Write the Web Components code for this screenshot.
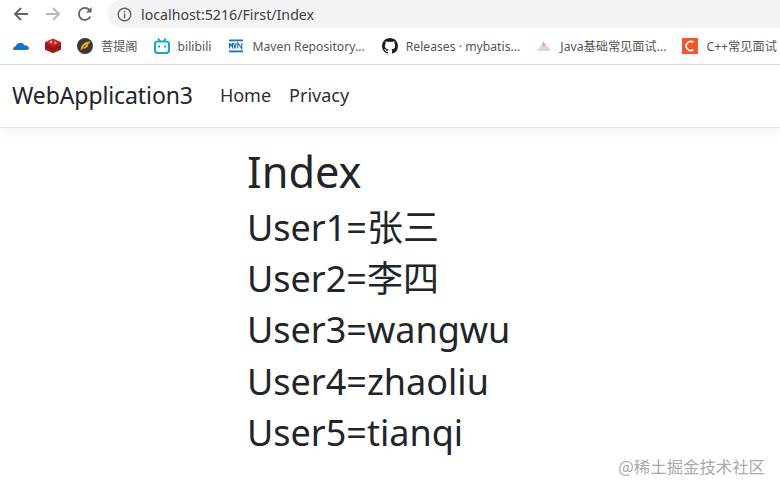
<!DOCTYPE html>
<html lang="zh">
<head>
<meta charset="utf-8">
<title>Index</title>
<style>
    html, body { margin: 0; height: 100%; background: #fff; overflow: hidden; }
    body {
        position: relative;
        display: flex;
        flex-direction: column;
        font-family: "Noto Sans", "Noto Sans CJK SC", sans-serif;
    }
</style>
</head>
<body>
<browser-toolbar url="localhost:5216/First/Index"></browser-toolbar>
<bookmark-bar>
    <bookmark-item icon="cloud"></bookmark-item>
    <bookmark-item icon="redis"></bookmark-item>
    <bookmark-item icon="leaf" label="菩提阁"></bookmark-item>
    <bookmark-item icon="bili" label="bilibili"></bookmark-item>
    <bookmark-item icon="mvn" label="Maven Repository..." style="margin-left: 1px"></bookmark-item>
    <bookmark-item icon="github" label="Releases · mybatis..." style="margin-left: 1px"></bookmark-item>
    <bookmark-item icon="java" label="Java基础常见面试..."></bookmark-item>
    <bookmark-item icon="cpp" label="C++常见面试"></bookmark-item>
</bookmark-bar>
<site-nav brand="WebApplication3">
    <a>Home</a>
    <a>Privacy</a>
</site-nav>
<page-content heading="Index">
    <user-line>User1=张三</user-line>
    <user-line>User2=李四</user-line>
    <user-line>User3=wangwu</user-line>
    <user-line>User4=zhaoliu</user-line>
    <user-line>User5=tianqi</user-line>
</page-content>
<water-mark>@稀土掘金技术社区</water-mark>

<script>
// Иконки закладок
const BOOKMARK_ICONS = {
    cloud: `<svg viewBox="1 2 16 16"><path fill="#1a6fd0" d="M1 13.200c0-1.600 1.200-2.800 2.700-2.900C4.400 8.200 6.200 6.800 8.400 6.800c1.800 0 3.300 1 4 2.500 2.300-.2 4.600 1.200 4.600 3 0 1-.8 1.700-2 1.700H3c-1.200 0-2-.3-2-.8z"/></svg>`,
    redis: `<svg viewBox="1 1.300 16 16"><path fill="#a51c1c" d="M1 5.500 9 2l8 3.500v7.500L9 16.500 1 13z"/><path fill="#cf2a27" d="M1 5.500 9 2l8 3.500L9 9z"/><path stroke="#7d1414" stroke-width="1" fill="none" d="M1 9.200l8 3.600 8-3.600"/><circle cx="7" cy="5.200" r="1.100" fill="#f6d6d0"/><circle cx="11.500" cy="6" r="1" fill="#f6d6d0"/></svg>`,
    leaf: `<svg viewBox="0 0 16 16"><circle cx="8" cy="8" r="8" fill="#3a3833"/><path fill="#e6ac1e" d="M3.500 12.500C3.600 7.500 7 3.800 13.300 3.300c-.4 1.300-1 2.300-2.200 3 .3 2.900-2.500 4.800-5.200 4.200-.9.500-1.700 1.200-2.400 2z"/><path fill="#3a3833" d="M6 9.200c1-1.400 2.300-2.400 4-3-1.200 1-2.200 2-3 3.300z"/></svg>`,
    bili: `<svg viewBox="0 0 16 16"><path stroke="#17a6cf" stroke-width="1.700" stroke-linecap="round" d="M4.500 1 6 3M11.500 1 10 3"/><rect x="1" y="3.500" width="14" height="11.500" rx="2.500" fill="#fff" stroke="#17a6cf" stroke-width="2.200"/><path stroke="#17a6cf" stroke-width="2" d="M5 7.500v2M11 7.500v2"/></svg>`,
    mvn: `<svg viewBox="0 0 16 16"><rect x="1" y="1.500" width="14" height="1.800" fill="#1b6fb8"/><rect x="1" y="12.500" width="14" height="1.800" fill="#1b6fb8"/><path fill="none" stroke="#1b6fb8" stroke-width="1.100" d="M1.500 10.500V5l1.500 3 1.500-3v5.500M5.600 5l1.300 5.500L8.200 5M9.800 10.500V5l4 5.500V5"/></svg>`,
    github: `<svg viewBox="0 0 16 16"><path fill="#1b1f23" d="M8 0C3.580 0 0 3.580 0 8c0 3.540 2.290 6.530 5.470 7.590.4.070.55-.17.55-.38 0-.19-.01-.82-.01-1.490-2.010.37-2.530-.49-2.690-.94-.09-.23-.48-.94-.82-1.130-.28-.15-.68-.52-.01-.53.630-.01 1.080.58 1.230.82.720 1.210 1.870.87 2.330.66.070-.52.280-.87.510-1.070-1.780-.2-3.640-.89-3.640-3.950 0-.87.310-1.590.820-2.150-.08-.2-.36-1.020.08-2.120 0 0 .67-.21 2.200.82.640-.18 1.320-.27 2-.27s1.360.09 2 .27c1.530-1.040 2.200-.82 2.200-.82.440 1.100.16 1.920.08 2.120.51.560.82 1.270.82 2.150 0 3.070-1.870 3.750-3.650 3.950.29.250.54.730.54 1.480 0 1.070-.01 1.930-.01 2.200 0 .21.150.46.55.38A8.010 8.010 0 0 0 16 8c0-4.420-3.580-8-8-8z"/></svg>`,
    java: `<svg viewBox="0 0 16 16"><path fill="#e0a9b8" d="M7.500 3 10.500 8.500H5z"/><path fill="#eec6d2" d="M4 8.500h8l1.500 2h-10z"/><path fill="#c4dde6" d="M1.500 10.500h13l-1 2.500h-11z"/></svg>`,
    cpp: `<svg viewBox="0 0 16 16"><rect width="16" height="16" fill="#f0582b"/><path fill="none" stroke="#fff" stroke-width="1.700" d="M11.300 4.300A4.500 4.500 0 1 0 11.300 11.700"/></svg>`
};

// Верхняя панель браузера
class BrowserToolbar extends HTMLElement {
    constructor() {
        super();
        this.attachShadow({ mode: 'open' });
    }

    connectedCallback() {
        this.shadowRoot.innerHTML = `
            <style>
                :host { display: flex; align-items: center; height: 28px; flex: none; background: #fff; }
                .btn { width: 18px; height: 18px; flex: none; display: block; }
                .back { margin-left: 12px; }
                .forward { margin-left: 14px; }
                .reload { margin-left: 14px; }
                .address {
                    flex: 1;
                    height: 28px;
                    margin-left: 14px;
                    background: #f1f3f4;
                    border-radius: 14px 0 0 14px;
                    display: flex;
                    align-items: center;
                    gap: 9px;
                    padding-left: 9px;
                    font: 14.200px "Noto Sans", sans-serif;
                    color: #3c4043;
                }
            </style>
            <svg class="btn back" viewBox="0 0 18 18"><path fill="none" stroke="#5f6368" stroke-width="1.800" d="M16 9H3M9 3 3 9l6 6"/></svg>
            <svg class="btn forward" viewBox="0 0 18 18"><path fill="none" stroke="#b5b8bb" stroke-width="1.800" d="M2 9h13M9 3l6 6-6 6"/></svg>
            <svg class="btn reload" viewBox="0 0 18 18"><path fill="none" stroke="#5f6368" stroke-width="1.800" d="M14.300 11.500A6 6 0 1 1 13.300 4.800"/><path fill="#5f6368" d="M15.500 2v5.500H10z"/></svg>
            <div class="address">
                <svg width="15" height="15" viewBox="0 0 15 15"><circle cx="7.500" cy="7.500" r="6.300" fill="none" stroke="#5f6368" stroke-width="1.400"/><rect x="6.800" y="6.500" width="1.500" height="4.500" fill="#5f6368"/><rect x="6.800" y="3.900" width="1.500" height="1.500" fill="#5f6368"/></svg>
                <span>${this.getAttribute('url')}</span>
            </div>
        `;
    }
}

// Панель закладок
class BookmarkBar extends HTMLElement {
    constructor() {
        super();
        this.attachShadow({ mode: 'open' });
    }

    connectedCallback() {
        this.shadowRoot.innerHTML = `
            <style>
                :host {
                    display: flex;
                    align-items: center;
                    gap: 16px;
                    height: 36px;
                    flex: none;
                    padding-left: 13px;
                    background: #fff;
                    border-bottom: 1px solid #dcdcdc;
                    overflow: hidden;
                    white-space: nowrap;
                }
            </style>
            <slot></slot>
        `;
    }
}

class BookmarkItem extends HTMLElement {
    constructor() {
        super();
        this.attachShadow({ mode: 'open' });
    }

    connectedCallback() {
        const label = this.getAttribute('label');
        this.shadowRoot.innerHTML = `
            <style>
                :host { display: flex; align-items: center; gap: 8px; flex: none; }
                span {
                    font: 12.200px "Noto Sans", "Noto Sans CJK SC", sans-serif;
                    color: #555;
                }
                svg { display: block; width: 16px; height: 16px; }
            </style>
            ${BOOKMARK_ICONS[this.getAttribute('icon')]}
            ${label ? `<span>${label}</span>` : ''}
        `;
    }
}

// Навигация сайта
class SiteNav extends HTMLElement {
    constructor() {
        super();
        this.attachShadow({ mode: 'open' });
    }

    connectedCallback() {
        this.shadowRoot.innerHTML = `
            <style>
                :host {
                    display: flex;
                    align-items: center;
                    box-sizing: border-box;
                    height: 63px;
                    flex: none;
                    padding: 0 0 2px 12px;
                    background: #fff;
                    border-bottom: 1px solid #e3e3e3;
                    box-shadow: 0 4px 10px rgba(0, 0, 0, 0.05);
                    position: relative;
                    font-family: "Noto Sans", sans-serif;
                    color: #212529;
                }
                .brand { font-size: 23px; margin-right: 27px; letter-spacing: -0.1px; }
                nav { display: flex; gap: 18px; font-size: 18px; }
                ::slotted(a) { color: #2b2f33; }
            </style>
            <div class="brand">${this.getAttribute('brand')}</div>
            <nav><slot></slot></nav>
        `;
    }
}

// Содержимое страницы
class PageContent extends HTMLElement {
    constructor() {
        super();
        this.attachShadow({ mode: 'open' });
    }

    connectedCallback() {
        this.shadowRoot.innerHTML = `
            <style>
                :host {
                    display: block;
                    padding: 13px 0 0 247px;
                    color: #212529;
                    font-family: "Noto Sans", "Noto Sans CJK SC", sans-serif;
                }
                h1 { margin: 0; font-size: 43.300px; font-weight: 400; line-height: 61px; }
            </style>
            <h1>${this.getAttribute('heading')}</h1>
            <slot></slot>
        `;
    }
}

class UserLine extends HTMLElement {
    constructor() {
        super();
        this.attachShadow({ mode: 'open' });
    }

    connectedCallback() {
        this.shadowRoot.innerHTML = `
            <style>
                :host { display: block; font-size: 36px; line-height: 51.200px; white-space: nowrap; }
            </style>
            <slot></slot>
        `;
    }
}

// Водяной знак поверх страницы
class WaterMark extends HTMLElement {
    constructor() {
        super();
        this.attachShadow({ mode: 'open' });
    }

    connectedCallback() {
        this.shadowRoot.innerHTML = `
            <style>
                :host {
                    position: absolute;
                    right: 15px;
                    bottom: 14px;
                    font: 16.400px "Noto Sans CJK SC", sans-serif;
                    color: #a9a9a9;
                }
            </style>
            <slot></slot>
        `;
    }
}

customElements.define('browser-toolbar', BrowserToolbar);
customElements.define('bookmark-bar', BookmarkBar);
customElements.define('bookmark-item', BookmarkItem);
customElements.define('site-nav', SiteNav);
customElements.define('page-content', PageContent);
customElements.define('user-line', UserLine);
customElements.define('water-mark', WaterMark);
</script>
</body>
</html>
